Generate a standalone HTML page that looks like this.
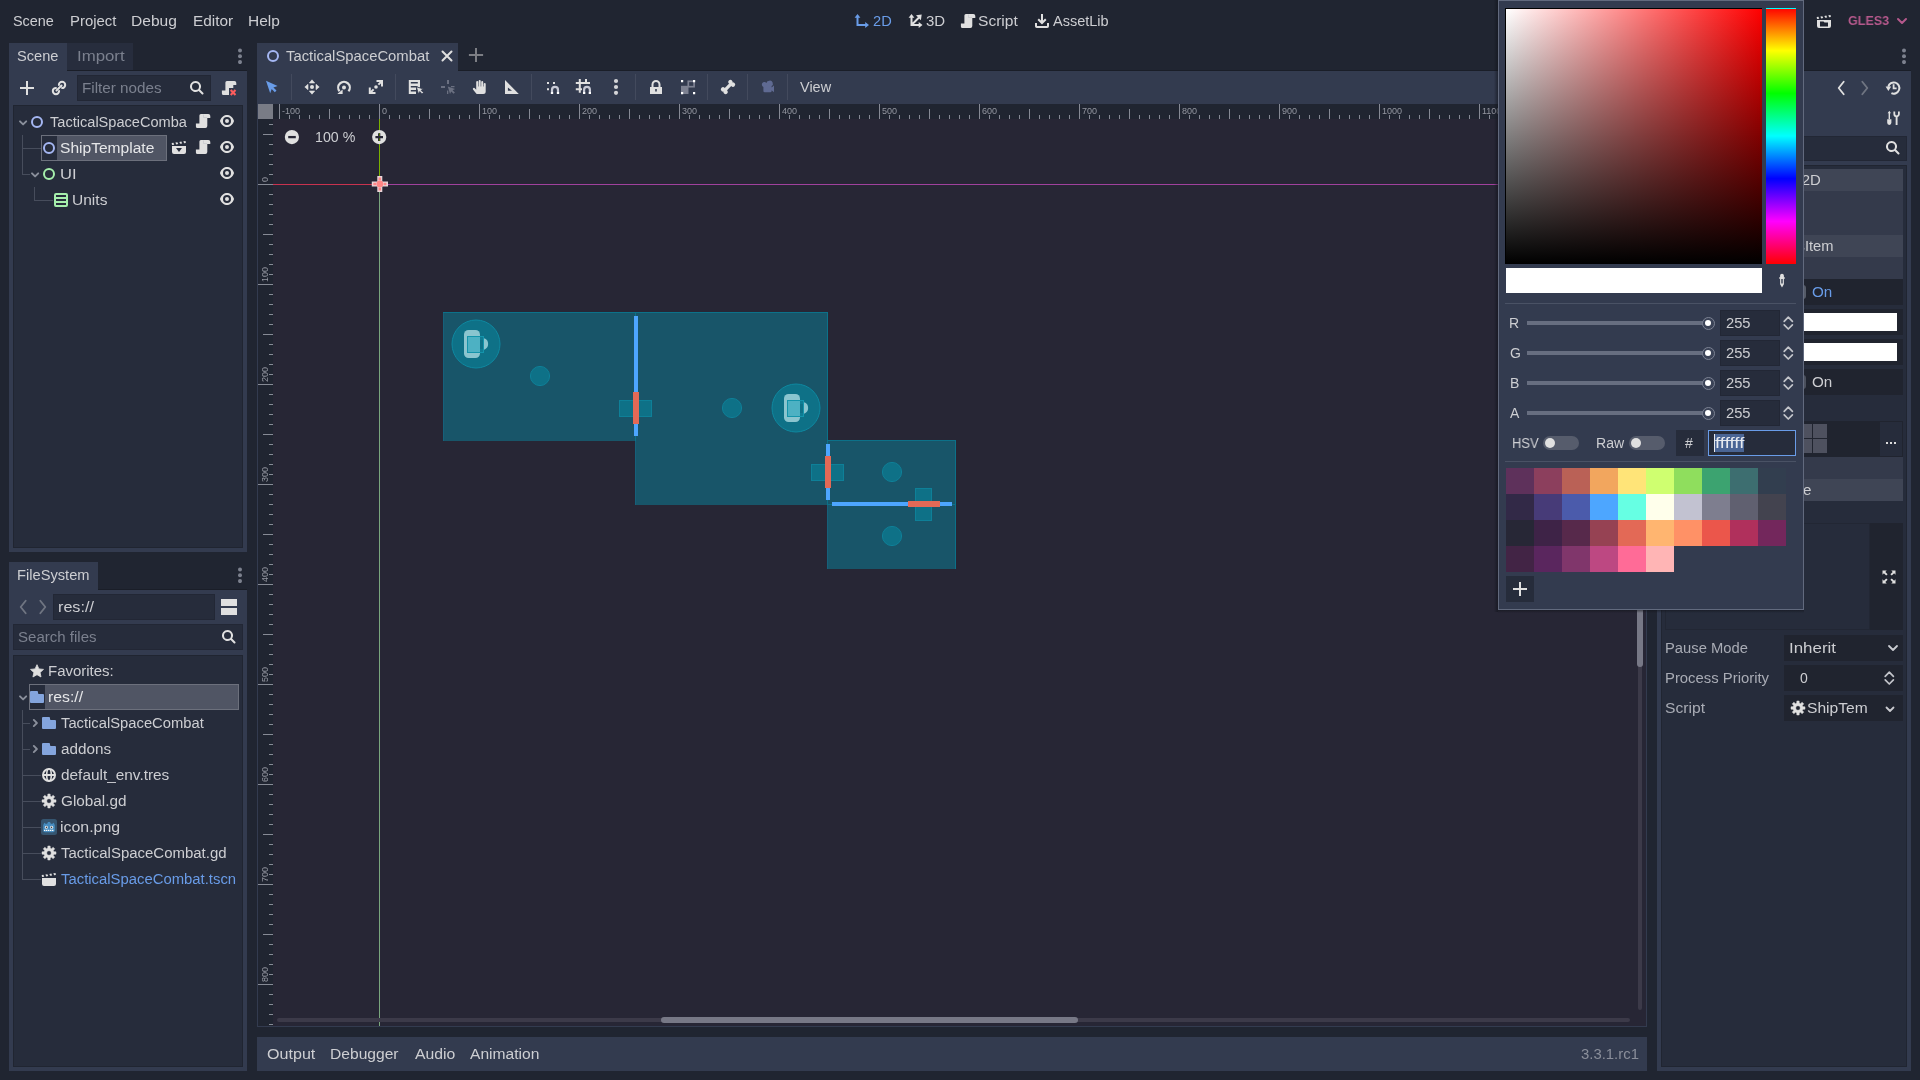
<!DOCTYPE html>
<html lang="en">
<head>
<meta charset="utf-8">
<title>Godot Engine - TacticalSpaceCombat</title>
<style>
*{box-sizing:border-box;margin:0;padding:0}
html,body{width:1920px;height:1080px;overflow:hidden;background:#202531}
body{position:relative;font-family:"Liberation Sans",sans-serif;font-size:14px;color:#cdced2;line-height:1}
.a{position:absolute}
.t{position:absolute;white-space:nowrap;line-height:20px;height:20px;font-size:14px;color:#cdced2}
.dim{color:#7b808e}
.acc{color:#699ce8}
svg{position:absolute;overflow:visible}
.ic{width:16px;height:16px}
.panel{position:absolute;background:#333b4f}
.tree{position:absolute;background:#262c3b;border:1px solid #202531}
.le{position:absolute;background:#262c3b;border:1px solid #222735}
.sep{position:absolute;width:1px;background:#434a5d}
.t{will-change:transform;transform-origin:0 0}
/*SECTION-CSS*/
</style>
</head>
<body>
<svg width="0" height="0" style="display:none">
<defs>

<symbol id="i-add" viewBox="0 0 16 16"><path d="M7 1v6H1v2h6v6h2V9h6V7H9V1z" fill="#e0e0e0"/></symbol>
<symbol id="i-link" viewBox="0 0 16 16"><g fill="none" stroke="#e0e0e0" stroke-width="2" stroke-linecap="round"><path d="M8.100 11.050A3.150 3.150 0 1 1 4.950 7.900"/><path d="M7.900 4.950A3.150 3.150 0 1 1 11.050 8.100"/><path d="M5.500 10.500L10.500 5.500"/></g></symbol>
<symbol id="i-search" viewBox="0 0 16 16"><path d="M6.500 1a5.500 5.500 0 1 0 3.120 10.030l3.170 3.180a1 1 0 1 0 1.420-1.420l-3.180-3.170A5.500 5.500 0 0 0 6.500 1zm0 2a3.500 3.500 0 1 1 0 7 3.500 3.500 0 0 1 0-7z" fill="#e0e0e0"/></symbol>
<symbol id="i-script" viewBox="0 0 16 16"><path d="M5.900 1H13.300a2 2 0 0 1 2 2V5H12.300V13a2 2 0 0 1-2 2H2.400a1.500 1.500 0 0 1-1.500-1.500V10.400H4.400V2.500a1.500 1.500 0 0 1 1.500-1.500z" fill="#e0e0e0"/><path d="M8.500 1.500V4.500H12" fill="none" stroke="#c4c6cb" stroke-width=".7"/></symbol>
<symbol id="i-eye" viewBox="0 0 16 16"><path d="M8 2C5.44 2 2.2 3.95 1.04 7.7a1 1 0 0 0 0 .57C2.16 12.2 5.5 14 8 14s5.84-1.8 6.96-5.73a1 1 0 0 0 0-.55C13.86 3.93 10.55 2 8 2zm0 2a4 4 0 0 1 0 8 4 4 0 0 1 0-8zm0 2a2 2 0 0 0 0 4 2 2 0 0 0 0-4z" fill="#e0e0e0"/></symbol>
<symbol id="i-node2d" viewBox="0 0 16 16"><circle cx="8" cy="8" r="5" fill="none" stroke="#a5b7f3" stroke-width="2"/></symbol>
<symbol id="i-control" viewBox="0 0 16 16"><circle cx="8" cy="8" r="5" fill="none" stroke="#a5efac" stroke-width="2"/></symbol>
<symbol id="i-vbox" viewBox="0 0 16 16"><path d="M3 1a2 2 0 0 0-2 2v10a2 2 0 0 0 2 2h10a2 2 0 0 0 2-2V3a2 2 0 0 0-2-2zm0 2h10v2H3zm0 4h10v2H3zm0 4h10v2H3z" fill="#a5efac"/></symbol>
<symbol id="i-scene" viewBox="0 0 16 16"><path d="M14.56 2l-2.24.33.82 1.9 1.71-.25zM10.34 2.62l-1.98.29.82 1.9 1.98-.29zM6.38 3.19l-1.98.29.82 1.9 1.98-.29zM2.43 3.77l-1.72.25.29 1.98 2.24-.33zM1 7v6a2 2 0 0 0 2 2h10a2 2 0 0 0 2-2V7z" fill="#e0e0e0"/></symbol>
<symbol id="i-inst" viewBox="0 0 16 16"><path d="M14.56 2l-2.24.33.82 1.9 1.71-.25zM10.34 2.62l-1.98.29.82 1.9 1.98-.29zM6.38 3.19l-1.98.29.82 1.9 1.98-.29zM2.43 3.77l-1.72.25.29 1.98 2.24-.33zM1 7v6a2 2 0 0 0 2 2h10a2 2 0 0 0 2-2V7zm4 2h6l-3 4z" fill="#e0e0e0" fill-rule="evenodd"/></symbol>
<symbol id="i-dots" viewBox="0 0 16 16"><g fill="#7c818e"><circle cx="9" cy="2.400" r="2"/><circle cx="9" cy="8.300" r="2"/><circle cx="9" cy="14.100" r="2"/></g></symbol>
<symbol id="i-dotsw" viewBox="0 0 16 16"><g fill="#e0e0e0"><circle cx="8" cy="3" r="1.7"/><circle cx="8" cy="8" r="1.7"/><circle cx="8" cy="13" r="1.7"/></g></symbol>
<symbol id="i-arrdown" viewBox="0 0 16 16"><path d="M5 7.300l3.100 3.100 3.100-3.100" fill="none" stroke="#8a8f9b" stroke-width="1.900" stroke-linecap="round" stroke-linejoin="round"/></symbol>
<symbol id="i-arrright" viewBox="0 0 16 16"><path d="M6.800 4.900l3.100 3.100-3.100 3.100" fill="none" stroke="#8a8f9b" stroke-width="1.900" stroke-linecap="round" stroke-linejoin="round"/></symbol>
<symbol id="i-folder" viewBox="0 0 16 16"><path d="M2 2a1 1 0 0 0-1 1v10a1 1 0 0 0 1 1h12a1 1 0 0 0 1-1V6a1 1 0 0 0-1-1h-4a1 1 0 0 1-1-1V3a1 1 0 0 0-1-1z" fill="#84a5dd"/></symbol>
<symbol id="i-star" viewBox="0 0 16 16"><path d="M8 1.7l1.9 4.2 4.6.5-3.4 3.1.9 4.5L8 11.7 3.9 14l1-4.5L1.5 6.4l4.6-.5z" fill="#e0e0e0" stroke="#e0e0e0" stroke-width=".8" stroke-linejoin="round"/></symbol>
<symbol id="i-gear" viewBox="0 0 16 16"><path d="M6.81 3.04L6.83 1.00L9.17 1.00L9.19 3.04L10.66 3.65L12.12 2.22L13.78 3.88L12.35 5.34L12.96 6.81L15.00 6.83L15.00 9.17L12.96 9.19L12.35 10.66L13.78 12.12L12.12 13.78L10.66 12.35L9.19 12.96L9.17 15.00L6.83 15.00L6.81 12.96L5.34 12.35L3.88 13.78L2.22 12.12L3.65 10.66L3.04 9.19L1.00 9.17L1.00 6.83L3.04 6.81L3.65 5.34L2.22 3.88L3.88 2.22L5.34 3.65zM8 5.700a2.300 2.300 0 1 0 0 4.600 2.300 2.300 0 0 0 0-4.600z" fill="#e0e0e0" fill-rule="evenodd" stroke="#e0e0e0" stroke-width=".5" stroke-linejoin="round"/></symbol>
<symbol id="i-env" viewBox="0 0 16 16"><g fill="none" stroke="#e0e0e0" stroke-width="2"><circle cx="8" cy="8" r="6"/><ellipse cx="8" cy="8" rx="2.300" ry="6" stroke-width="1.600"/><path d="M2 8h12"/></g></symbol>
<symbol id="i-back" viewBox="0 0 16 16"><path d="M10.700 1.700L5.700 8l5 6.300" fill="none" stroke="#e0e0e0" stroke-width="1.800" stroke-linecap="round" stroke-linejoin="round"/></symbol>
<symbol id="i-fwd" viewBox="0 0 16 16"><path d="M5.300 1.700L10.300 8l-5 6.300" fill="none" stroke="#e0e0e0" stroke-width="1.800" stroke-linecap="round" stroke-linejoin="round"/></symbol>
<symbol id="i-updown" viewBox="0 0 16 16"><path d="M4.200 6.300L8.300 2.200l4.100 4.100M4.200 9.900L8.300 14l4.100-4.100" fill="none" stroke="#c3c5cb" stroke-width="1.700" stroke-linecap="round" stroke-linejoin="round"/></symbol>
<!--SYMBOLS-->
</defs>
</svg>


<div class="t" style="left:13.2px;top:11px;transform:scaleX(1.0293)">Scene</div>
<div class="t" style="left:69.5px;top:11px;transform:scaleX(1.0642)">Project</div>
<div class="t" style="left:131.2px;top:11px;transform:scaleX(1.1123)">Debug</div>
<div class="t" style="left:192.5px;top:11px;transform:scaleX(1.0969)">Editor</div>
<div class="t" style="left:248.3px;top:11px;transform:scaleX(1.1053)">Help</div>
<svg class="ic" style="left:854px;top:13px" viewBox="0 0 16 16"><path d="M3.500 4V12H12" fill="none" stroke="#699ce8" stroke-width="2"/><path d="M.6 4.800L3.500 1l2.900 3.800zM11.200 9.100L15 12l-3.800 2.900z" fill="#699ce8"/></svg>
<div class="t acc" style="left:873.0px;top:11px;transform:scaleX(1.0452)">2D</div>
<svg class="ic" style="left:908px;top:13px" viewBox="0 0 16 16"><path d="M3.500 4V12H11.500M3.500 12L11 4.500" fill="none" stroke="#e0e0e0" stroke-width="2"/><path d="M.6 4.800L3.500 1l2.900 3.800zM10.700 9.100L14.500 12l-3.800 2.900zM8 2.300l5.700-.8-.8 5.700z" fill="#e0e0e0"/></svg>
<div class="t" style="left:925.6px;top:11px;transform:scaleX(1.0699)">3D</div>
<svg class="ic" style="left:960px;top:13px"><use href="#i-script"/></svg>
<div class="t" style="left:978.3px;top:11px;transform:scaleX(1.1116)">Script</div>
<svg class="ic" style="left:1034px;top:13px" viewBox="0 0 16 16"><g fill="none" stroke="#e0e0e0" stroke-width="2"><path d="M8 1V9.500"/><path d="M4.200 6.200L8 10l3.800-3.800" stroke-linejoin="miter"/><path d="M2 10v3.200a.8.800 0 0 0 .8.800h10.400a.8.800 0 0 0 .8-.8V10"/></g></svg>
<div class="t" style="left:1053.1px;top:11px;transform:scaleX(1.0359)">AssetLib</div>
<svg class="ic" style="left:1816px;top:13px" viewBox="0 0 16 16"><path d="M14.560 2l-2.240.33.820 1.900 1.710-.250zM10.340 2.620l-1.980.290.820 1.900 1.980-.290zM6.380 3.190l-1.980.290.820 1.900 1.980-.290zM2.430 3.770l-1.720.250.290 1.980 2.240-.330zM1 7v6a2 2 0 0 0 2 2h10a2 2 0 0 0 2-2V7zm3 1.500h3.500l1 1H12V13.500H4z" fill="#e0e0e0" fill-rule="evenodd"/></svg>
<div class="t" style="left:1848.3px;top:11px;color:#b5598c;font-weight:bold;font-size:13.5px;transform:scaleX(0.9300)">GLES3</div>
<svg class="ic" style="left:1894px;top:13px" viewBox="0 0 16 16"><path d="M4 6l4 4 4-4" fill="none" stroke="#b5598c" stroke-width="2" stroke-linecap="round" stroke-linejoin="round"/></svg>



<div class="a" style="left:67px;top:43px;width:66px;height:27px;background:#272d3d"></div>
<div class="a" style="left:9px;top:43px;width:58px;height:29px;background:#333b4f"></div>
<div class="t" style="left:16.9px;top:46px;transform:scaleX(1.0451)">Scene</div>
<div class="t dim" style="left:76.8px;top:46px;transform:scaleX(1.2000)">Import</div>
<svg class="ic" style="left:231px;top:48px"><use href="#i-dots"/></svg>
<div class="panel" style="left:9px;top:71px;width:238px;height:481px"></div>
<svg class="ic" style="left:19px;top:80px"><use href="#i-add"/></svg>
<svg class="ic" style="left:51px;top:80px"><use href="#i-link"/></svg>
<div class="le" style="left:77px;top:75px;width:134px;height:26px"></div>
<div class="t dim" style="left:82.4px;top:78px;transform:scaleX(1.0877)">Filter nodes</div>
<svg class="ic" style="left:189px;top:80px"><use href="#i-search"/></svg>
<svg class="ic" style="left:221px;top:80px" viewBox="0 0 16 16"><path d="M5.900 1H13.300a2 2 0 0 1 2 2V5H12.300V8H8V15H2.400a1.500 1.500 0 0 1-1.500-1.500V10.400H4.400V2.500a1.500 1.500 0 0 1 1.500-1.500z" fill="#e0e0e0"/><path d="M9.700 10.100l4.800 4.800m0-4.800l-4.800 4.800" stroke="#ff5d5d" stroke-width="2.100"/></svg>
<div class="tree" style="left:13px;top:105px;width:230px;height:443px"></div>

<div class="a" style="left:67px;top:70px;width:180px;height:1px;background:#1a1e28"></div>
<div class="a" style="left:98px;top:589px;width:149px;height:1px;background:#1a1e28"></div>
<div class="a" style="left:458px;top:70px;width:1189px;height:1px;background:#1a1e28"></div>
<div class="a" style="left:1738px;top:70px;width:173px;height:1px;background:#1a1e28"></div>
<!-- tree lines -->
<div class="a" style="left:22px;top:135px;width:1px;height:40px;background:#474d5c"></div>
<div class="a" style="left:22px;top:148px;width:19px;height:1px;background:#474d5c"></div>
<div class="a" style="left:22px;top:174px;width:8px;height:1px;background:#474d5c"></div>
<div class="a" style="left:34px;top:187px;width:1px;height:14px;background:#474d5c"></div>
<div class="a" style="left:34px;top:200px;width:19px;height:1px;background:#474d5c"></div>
<!-- row 1 -->
<svg class="ic" style="left:15px;top:114px"><use href="#i-arrdown"/></svg>
<svg class="ic" style="left:29px;top:114px"><use href="#i-node2d"/></svg>
<div class="t" style="left:49.5px;top:112px;transform:scaleX(1.0414)">TacticalSpaceComba</div>
<svg class="ic" style="left:195px;top:113px"><use href="#i-script"/></svg>
<svg class="ic" style="left:219px;top:113px"><use href="#i-eye"/></svg>
<!-- row 2 -->
<div class="a" style="left:41px;top:135px;width:126px;height:26px;background:#505564;border:1px solid #6c707c"></div>
<div class="a" style="left:42px;top:136px;width:15px;height:24px;background:#262c3b"></div>
<svg class="ic" style="left:41px;top:140px"><use href="#i-node2d"/></svg>
<div class="t" style="left:60.0px;top:138px;color:#e6e7e9;transform:scaleX(1.1123)">ShipTemplate</div>
<svg class="ic" style="left:171px;top:139px"><use href="#i-inst"/></svg>
<svg class="ic" style="left:195px;top:139px"><use href="#i-script"/></svg>
<svg class="ic" style="left:219px;top:139px"><use href="#i-eye"/></svg>
<!-- row 3 -->
<svg class="ic" style="left:27px;top:166px"><use href="#i-arrdown"/></svg>
<svg class="ic" style="left:41px;top:166px"><use href="#i-control"/></svg>
<div class="t" style="left:60.3px;top:164px;transform:scaleX(1.1830)">UI</div>
<svg class="ic" style="left:219px;top:165px"><use href="#i-eye"/></svg>
<!-- row 4 -->
<svg class="ic" style="left:53px;top:192px"><use href="#i-vbox"/></svg>
<div class="t" style="left:72.3px;top:190px;transform:scaleX(1.1098)">Units</div>
<svg class="ic" style="left:219px;top:191px"><use href="#i-eye"/></svg>



<div class="a" style="left:9px;top:562px;width:89px;height:29px;background:#333b4f"></div>
<div class="t" style="left:16.9px;top:565px;transform:scaleX(1.0482)">FileSystem</div>
<svg class="ic" style="left:231px;top:567px"><use href="#i-dots"/></svg>
<div class="panel" style="left:9px;top:590px;width:238px;height:481px"></div>
<svg class="ic" style="left:15px;top:599px;opacity:.35"><use href="#i-back"/></svg>
<svg class="ic" style="left:35px;top:599px;opacity:.35"><use href="#i-fwd"/></svg>
<div class="le" style="left:53px;top:594px;width:162px;height:26px"></div>
<div class="t" style="left:58.1px;top:597px;transform:scaleX(1.1544)">res://</div>
<svg class="ic" style="left:221px;top:599px" viewBox="0 0 16 16"><path d="M0 0h16v7H0zM0 9h16v7H0z" fill="#e0e0e0"/></svg>
<div class="le" style="left:13px;top:624px;width:230px;height:26px"></div>
<div class="t dim" style="left:18.2px;top:627px;transform:scaleX(1.0734)">Search files</div>
<svg class="ic" style="left:221px;top:629px"><use href="#i-search"/></svg>
<div class="tree" style="left:13px;top:655px;width:230px;height:412px"></div>
<div class="a" style="left:22px;top:710px;width:1px;height:170px;background:#474d5c"></div>
<div class="a" style="left:22px;top:723px;width:8px;height:1px;background:#474d5c"></div>
<div class="a" style="left:22px;top:749px;width:8px;height:1px;background:#474d5c"></div>
<div class="a" style="left:22px;top:775px;width:19px;height:1px;background:#474d5c"></div>
<div class="a" style="left:22px;top:801px;width:19px;height:1px;background:#474d5c"></div>
<div class="a" style="left:22px;top:827px;width:19px;height:1px;background:#474d5c"></div>
<div class="a" style="left:22px;top:853px;width:19px;height:1px;background:#474d5c"></div>
<div class="a" style="left:22px;top:879px;width:19px;height:1px;background:#474d5c"></div>
<svg class="ic" style="left:29px;top:663px"><use href="#i-star"/></svg>
<div class="t" style="left:48.3px;top:661px;transform:scaleX(1.0701)">Favorites:</div>
<div class="a" style="left:29px;top:684px;width:210px;height:26px;background:#505564;border:1px solid #6c707c"></div>
<div class="a" style="left:30px;top:685px;width:15px;height:24px;background:#262c3b"></div>
<svg class="ic" style="left:15px;top:689px"><use href="#i-arrdown"/></svg>
<svg class="ic" style="left:29px;top:689px"><use href="#i-folder"/></svg>
<div class="t" style="left:48.4px;top:687px;color:#e6e7e9;transform:scaleX(1.1277)">res://</div>
<svg class="ic" style="left:27px;top:715px"><use href="#i-arrright"/></svg>
<svg class="ic" style="left:41px;top:715px"><use href="#i-folder"/></svg>
<div class="t" style="left:61.0px;top:713px;transform:scaleX(1.0547)">TacticalSpaceCombat</div>
<svg class="ic" style="left:27px;top:741px"><use href="#i-arrright"/></svg>
<svg class="ic" style="left:41px;top:741px"><use href="#i-folder"/></svg>
<div class="t" style="left:60.7px;top:739px;transform:scaleX(1.0904)">addons</div>
<svg class="ic" style="left:41px;top:767px"><use href="#i-env"/></svg>
<div class="t" style="left:60.7px;top:765px;transform:scaleX(1.0987)">default_env.tres</div>
<svg class="ic" style="left:41px;top:793px"><use href="#i-gear"/></svg>
<div class="t" style="left:60.6px;top:791px;transform:scaleX(1.0924)">Global.gd</div>
<svg class="ic" style="left:41px;top:819px" viewBox="0 0 16 16"><rect x="0" y="0" width="16" height="16" rx="2.500" fill="#355570"/><path d="M2.200 6.200L3.300 3.800l1.700 1.300 1.300-.5.700-1.500h2l.7 1.500 1.300.5 1.700-1.300 1.100 2.400v5.300a1.800 1.800 0 0 1-1.800 1.800H4a1.800 1.800 0 0 1-1.800-1.800z" fill="#478cbf"/><circle cx="5.400" cy="8.300" r="1.500" fill="#fff"/><circle cx="10.600" cy="8.300" r="1.500" fill="#fff"/><circle cx="5.500" cy="8.400" r=".8" fill="#414042"/><circle cx="10.500" cy="8.400" r=".8" fill="#414042"/><path d="M3 11.400h10" stroke="#fff" stroke-width="1.200" stroke-dasharray="1.400 .6"/></svg>
<div class="t" style="left:60.2px;top:817px;transform:scaleX(1.1353)">icon.png</div>
<svg class="ic" style="left:41px;top:845px"><use href="#i-gear"/></svg>
<div class="t" style="left:61.2px;top:843px;transform:scaleX(1.0689)">TacticalSpaceCombat.gd</div>
<svg class="ic" style="left:41px;top:871px"><use href="#i-scene"/></svg>
<div class="t acc" style="left:61.2px;top:869px;transform:scaleX(1.0615)">TacticalSpaceCombat.tscn</div>



<div class="a" style="left:257px;top:43px;width:201px;height:29px;background:#333b4f"></div>
<svg class="ic" style="left:265px;top:48px"><use href="#i-node2d"/></svg>
<div class="t" style="left:286.0px;top:46px;transform:scaleX(1.0584)">TacticalSpaceCombat</div>
<svg class="ic" style="left:439px;top:48px" viewBox="0 0 16 16"><path d="M3.500 3.500l9 9m0-9l-9 9" stroke="#e0e0e0" stroke-width="2" stroke-linecap="round"/></svg>
<svg class="ic" style="left:468px;top:47px" viewBox="0 0 16 16"><path d="M8 .9v14.200M.9 8h14.200" stroke="#7c7e84" stroke-width="2"/></svg>
<div class="panel" style="left:257px;top:71px;width:1390px;height:956px"></div>
<div class="a" id="vp" style="left:258px;top:104px;width:1388px;height:922px;background:#272635;overflow:hidden"></div>
<svg class="a" style="left:0;top:0;will-change:transform" width="1920" height="1080" viewBox="0 0 1920 1080">
<defs><clipPath id="vpc"><rect x="258" y="104" width="1388" height="922"/></clipPath></defs>
<g clip-path="url(#vpc)">
<!-- axes -->
<path d="M273 184.500H379" stroke="#c8324f" stroke-width="1"/>
<path d="M379 184.500H1646" stroke="#a0419d" stroke-width="1"/>
<path d="M379.500 119V184" stroke="#7bb000" stroke-width="1"/>
<path d="M379.500 184V1026" stroke="#79a67d" stroke-width="1"/>
<!-- rooms -->
<g fill="#185569">
<rect x="443" y="312" width="193" height="129"/><rect x="635" y="312" width="193" height="193"/><rect x="827" y="440" width="129" height="129"/>
</g>
<g stroke="#16607a" stroke-width="1" fill="none"><path d="M443.500 312V441M635.500 312V505M827.500 440V569"/></g>
<g stroke="#0c7189" stroke-width="1" fill="none"><path d="M443 312.500H828M827 440.500H956M827 504.500H956M635.500 312V441M827.500 312V505M955.500 440V569"/></g>
<g fill="#0e7187" stroke="#0e8098" stroke-width="1">
<circle cx="540" cy="376" r="9.600"/><circle cx="732" cy="408" r="9.600"/><circle cx="892" cy="472" r="9.600"/><circle cx="892" cy="536" r="9.600"/>
<rect x="619.500" y="400.500" width="32" height="16"/><rect x="811.500" y="464.500" width="32" height="16"/><rect x="915.500" y="488.500" width="16" height="32"/>
<circle cx="476" cy="344" r="24" stroke="#0e88a0"/><circle cx="796" cy="408" r="24" stroke="#0e88a0"/>
</g>
<g id="unit1">
<rect x="464" y="330" width="16" height="28" rx="4.500" fill="#8ac5cf"/>
<path d="M484 338.300A6 6 0 0 1 484 349.700z" fill="#8ac5cf"/>
<rect x="467" y="336" width="17" height="17" fill="#1494ab"/>
<rect x="468" y="337" width="12" height="15" fill="#4db1c3"/>
<rect x="480" y="337" width="3" height="15" fill="#0f7c93"/>
<rect x="480" y="340" width="3" height="9" fill="#0e7187"/>
</g>
<use href="#unit1" x="320" y="64"/>
<g fill="#4da6ff"><rect x="634" y="316" width="4" height="120"/><rect x="826" y="444" width="4" height="56"/><rect x="832" y="502" width="120" height="4"/></g>
<g fill="#e36956"><rect x="633" y="392" width="6" height="32"/><rect x="825" y="456" width="6" height="32"/><rect x="908" y="501" width="32" height="6"/></g>
<!-- rulers -->
<rect x="258" y="104" width="1388" height="15" fill="#202531"/>
<rect x="258" y="104" width="15" height="922" fill="#202531"/>
<rect x="258" y="104" width="15" height="15" fill="#797c86"/>
<g stroke="#868a95" stroke-width="1" fill="none"><path d="M279.5 104v15"/><path d="M289.5 115v4"/><path d="M299.5 115v4"/><path d="M309.5 115v4"/><path d="M319.5 115v4"/><path d="M329.5 109v10"/><path d="M339.5 115v4"/><path d="M349.5 115v4"/><path d="M359.5 115v4"/><path d="M369.5 115v4"/><path d="M379.5 104v15"/><path d="M389.5 115v4"/><path d="M399.5 115v4"/><path d="M409.5 115v4"/><path d="M419.5 115v4"/><path d="M429.5 109v10"/><path d="M439.5 115v4"/><path d="M449.5 115v4"/><path d="M459.5 115v4"/><path d="M469.5 115v4"/><path d="M479.5 104v15"/><path d="M489.5 115v4"/><path d="M499.5 115v4"/><path d="M509.5 115v4"/><path d="M519.5 115v4"/><path d="M529.5 109v10"/><path d="M539.5 115v4"/><path d="M549.5 115v4"/><path d="M559.5 115v4"/><path d="M569.5 115v4"/><path d="M579.5 104v15"/><path d="M589.5 115v4"/><path d="M599.5 115v4"/><path d="M609.5 115v4"/><path d="M619.5 115v4"/><path d="M629.5 109v10"/><path d="M639.5 115v4"/><path d="M649.5 115v4"/><path d="M659.5 115v4"/><path d="M669.5 115v4"/><path d="M679.5 104v15"/><path d="M689.5 115v4"/><path d="M699.5 115v4"/><path d="M709.5 115v4"/><path d="M719.5 115v4"/><path d="M729.5 109v10"/><path d="M739.5 115v4"/><path d="M749.5 115v4"/><path d="M759.5 115v4"/><path d="M769.5 115v4"/><path d="M779.5 104v15"/><path d="M789.5 115v4"/><path d="M799.5 115v4"/><path d="M809.5 115v4"/><path d="M819.5 115v4"/><path d="M829.5 109v10"/><path d="M839.5 115v4"/><path d="M849.5 115v4"/><path d="M859.5 115v4"/><path d="M869.5 115v4"/><path d="M879.5 104v15"/><path d="M889.5 115v4"/><path d="M899.5 115v4"/><path d="M909.5 115v4"/><path d="M919.5 115v4"/><path d="M929.5 109v10"/><path d="M939.5 115v4"/><path d="M949.5 115v4"/><path d="M959.5 115v4"/><path d="M969.5 115v4"/><path d="M979.5 104v15"/><path d="M989.5 115v4"/><path d="M999.5 115v4"/><path d="M1009.5 115v4"/><path d="M1019.5 115v4"/><path d="M1029.5 109v10"/><path d="M1039.5 115v4"/><path d="M1049.5 115v4"/><path d="M1059.5 115v4"/><path d="M1069.5 115v4"/><path d="M1079.5 104v15"/><path d="M1089.5 115v4"/><path d="M1099.5 115v4"/><path d="M1109.5 115v4"/><path d="M1119.5 115v4"/><path d="M1129.5 109v10"/><path d="M1139.5 115v4"/><path d="M1149.5 115v4"/><path d="M1159.5 115v4"/><path d="M1169.5 115v4"/><path d="M1179.5 104v15"/><path d="M1189.5 115v4"/><path d="M1199.5 115v4"/><path d="M1209.5 115v4"/><path d="M1219.5 115v4"/><path d="M1229.5 109v10"/><path d="M1239.5 115v4"/><path d="M1249.5 115v4"/><path d="M1259.5 115v4"/><path d="M1269.5 115v4"/><path d="M1279.5 104v15"/><path d="M1289.5 115v4"/><path d="M1299.5 115v4"/><path d="M1309.5 115v4"/><path d="M1319.5 115v4"/><path d="M1329.5 109v10"/><path d="M1339.5 115v4"/><path d="M1349.5 115v4"/><path d="M1359.5 115v4"/><path d="M1369.5 115v4"/><path d="M1379.5 104v15"/><path d="M1389.5 115v4"/><path d="M1399.5 115v4"/><path d="M1409.5 115v4"/><path d="M1419.5 115v4"/><path d="M1429.5 109v10"/><path d="M1439.5 115v4"/><path d="M1449.5 115v4"/><path d="M1459.5 115v4"/><path d="M1469.5 115v4"/><path d="M1479.5 104v15"/><path d="M1489.5 115v4"/><path d="M1499.5 115v4"/><path d="M1509.5 115v4"/><path d="M1519.5 115v4"/><path d="M1529.5 109v10"/><path d="M1539.5 115v4"/><path d="M1549.5 115v4"/><path d="M1559.5 115v4"/><path d="M1569.5 115v4"/><path d="M1579.5 104v15"/><path d="M1589.5 115v4"/><path d="M1599.5 115v4"/><path d="M1609.5 115v4"/><path d="M1619.5 115v4"/><path d="M1629.5 109v10"/><path d="M1639.5 115v4"/><path d="M269 124.5h4"/><path d="M263 134.5h10"/><path d="M269 144.5h4"/><path d="M269 154.5h4"/><path d="M269 164.5h4"/><path d="M269 174.5h4"/><path d="M258 184.5h15"/><path d="M269 194.5h4"/><path d="M269 204.5h4"/><path d="M269 214.5h4"/><path d="M269 224.5h4"/><path d="M263 234.5h10"/><path d="M269 244.5h4"/><path d="M269 254.5h4"/><path d="M269 264.5h4"/><path d="M269 274.5h4"/><path d="M258 284.5h15"/><path d="M269 294.5h4"/><path d="M269 304.5h4"/><path d="M269 314.5h4"/><path d="M269 324.5h4"/><path d="M263 334.5h10"/><path d="M269 344.5h4"/><path d="M269 354.5h4"/><path d="M269 364.5h4"/><path d="M269 374.5h4"/><path d="M258 384.5h15"/><path d="M269 394.5h4"/><path d="M269 404.5h4"/><path d="M269 414.5h4"/><path d="M269 424.5h4"/><path d="M263 434.5h10"/><path d="M269 444.5h4"/><path d="M269 454.5h4"/><path d="M269 464.5h4"/><path d="M269 474.5h4"/><path d="M258 484.5h15"/><path d="M269 494.5h4"/><path d="M269 504.5h4"/><path d="M269 514.5h4"/><path d="M269 524.5h4"/><path d="M263 534.5h10"/><path d="M269 544.5h4"/><path d="M269 554.5h4"/><path d="M269 564.5h4"/><path d="M269 574.5h4"/><path d="M258 584.5h15"/><path d="M269 594.5h4"/><path d="M269 604.5h4"/><path d="M269 614.5h4"/><path d="M269 624.5h4"/><path d="M263 634.5h10"/><path d="M269 644.5h4"/><path d="M269 654.5h4"/><path d="M269 664.5h4"/><path d="M269 674.5h4"/><path d="M258 684.5h15"/><path d="M269 694.5h4"/><path d="M269 704.5h4"/><path d="M269 714.5h4"/><path d="M269 724.5h4"/><path d="M263 734.5h10"/><path d="M269 744.5h4"/><path d="M269 754.5h4"/><path d="M269 764.5h4"/><path d="M269 774.5h4"/><path d="M258 784.5h15"/><path d="M269 794.5h4"/><path d="M269 804.5h4"/><path d="M269 814.5h4"/><path d="M269 824.5h4"/><path d="M263 834.5h10"/><path d="M269 844.5h4"/><path d="M269 854.5h4"/><path d="M269 864.5h4"/><path d="M269 874.5h4"/><path d="M258 884.5h15"/><path d="M269 894.5h4"/><path d="M269 904.5h4"/><path d="M269 914.5h4"/><path d="M269 924.5h4"/><path d="M263 934.5h10"/><path d="M269 944.5h4"/><path d="M269 954.5h4"/><path d="M269 964.5h4"/><path d="M269 974.5h4"/><path d="M258 984.5h15"/><path d="M269 994.5h4"/><path d="M269 1004.5h4"/><path d="M269 1014.5h4"/><path d="M269 1024.5h4"/></g>
<g font-family="Liberation Sans, sans-serif" font-size="9" fill="#9497a1"><text x="282" y="114">-100</text><text x="382" y="114">0</text><text x="482" y="114">100</text><text x="582" y="114">200</text><text x="682" y="114">300</text><text x="782" y="114">400</text><text x="882" y="114">500</text><text x="982" y="114">600</text><text x="1082" y="114">700</text><text x="1182" y="114">800</text><text x="1282" y="114">900</text><text x="1382" y="114">1000</text><text x="1482" y="114">1100</text><text transform="translate(268 182) rotate(-90)">0</text><text transform="translate(268 282) rotate(-90)">100</text><text transform="translate(268 382) rotate(-90)">200</text><text transform="translate(268 482) rotate(-90)">300</text><text transform="translate(268 582) rotate(-90)">400</text><text transform="translate(268 682) rotate(-90)">500</text><text transform="translate(268 782) rotate(-90)">600</text><text transform="translate(268 882) rotate(-90)">700</text><text transform="translate(268 982) rotate(-90)">800</text></g>
<!-- scrollbars -->
<rect x="277" y="1018" width="1353" height="4" rx="2" fill="#3c3a49"/>
<rect x="661" y="1017" width="417" height="6" rx="3" fill="#777886"/>
<rect x="1638" y="124" width="4" height="886" rx="2" fill="#3c3a49"/>
<rect x="1637" y="560" width="6" height="107" rx="3" fill="#777886"/>
<!-- origin cross -->
<g><path d="M377.300 176h5v5.500h5.700v5h-5.700V192h-5v-5.500h-5.500v-5h5.500z" fill="#e9d6da"/><circle cx="379.800" cy="184" r="3.400" fill="#ff8686"/><path d="M378.500 177.500h2.600v2.800h-2.600zM378.500 187.800h2.600v2.800h-2.600zM373.300 182.700h2.800v2.600h-2.800zM383.600 182.700h2.800v2.600h-2.800z" fill="#ff8686"/></g>
</g>
</svg>
<!-- zoom controls -->
<svg class="ic" style="left:284px;top:129px" viewBox="0 0 16 16"><circle cx="7.900" cy="8.100" r="7.100" fill="#e0e0e0"/><path d="M4.200 8.100h7.600" stroke="#272635" stroke-width="2.300"/></svg>
<div class="t" style="left:314.7px;top:127px;transform:scaleX(1.0146)">100 %</div>
<svg class="ic" style="left:371px;top:129px" viewBox="0 0 16 16"><circle cx="8.200" cy="8.100" r="7.100" fill="#e0e0e0"/><path d="M4.400 8.100h7.600M8.200 4.300v7.600" stroke="#272635" stroke-width="2.300"/><path d="M8.500 4.300v2.600M8.500 9.300v2.600" stroke="#4f7300" stroke-width="1"/></svg>
<svg class="ic" style="left:264px;top:79px" viewBox="0 0 16 16"><path d="M2 1.800L13.600 6.900 9.400 8.400l3.100 3.100-1.700 1.700-3.100-3.100-1.500 4.200z" fill="#699ce8"/></svg>
<div class="sep" style="left:291px;top:74px;height:26px"></div>
<svg class="ic" style="left:304px;top:79px" viewBox="0 0 16 16"><path d="M8 .8l2.700 3.200H5.300zM8 15.200l-2.700-3.200h5.400zM.8 8l3.200-2.700v5.400zM15.200 8l-3.200 2.700V5.300z" fill="#e0e0e0" stroke="#e0e0e0" stroke-width=".6" stroke-linejoin="round"/><circle cx="8" cy="8" r="2" fill="#e0e0e0"/></svg>
<svg class="ic" style="left:336px;top:79px" viewBox="0 0 16 16"><path d="M3.560 12.300A5.800 5.800 0 1 1 12.440 12.300" fill="none" stroke="#e0e0e0" stroke-width="2.200"/><path d="M1.300 15H6.600V10.400z" fill="#e0e0e0"/><circle cx="8" cy="8.400" r="2" fill="#e0e0e0"/></svg>
<svg class="ic" style="left:368px;top:79px" viewBox="0 0 16 16"><path d="M8.500 1H15V7.500H13V3H8.500zM.8 8.500H2.800V13H7.500V15H.8z" fill="#e0e0e0"/><path d="M13.800 2.200L10.400 5.600M2.200 13.800l3.400-3.400" stroke="#e0e0e0" stroke-width="2"/><circle cx="8" cy="8" r="1.800" fill="#e0e0e0"/></svg>
<div class="sep" style="left:395px;top:74px;height:26px"></div>
<svg class="ic" style="left:408px;top:79px" viewBox="0 0 16 16"><path d="M.8 1H12V8.500H9.500V7H2.800V8.500H8V11H2.800v1.500H8V15H.8zM2.800 3V4.500h7V3z" fill="#e0e0e0" fill-rule="evenodd"/><path d="M8.300 7.800l2.200 7.200 1.300-2.400 2.300 2.300 1.300-1.300-2.300-2.300 2.400-1.300z" fill="#e0e0e0" stroke="#333b4f" stroke-width=".8"/></svg>
<svg class="ic" style="left:440px;top:79px" viewBox="0 0 16 16"><g fill="#6b7081"><path d="M7 1h2v4H7zM1 7h4v2H1zM7 11.500h1.300V15H7zM11 7h3.500v1.300H11z"/><path d="M7.800 7.600l2.200 7.400 1.300-2.500 2.300 2.300 1.300-1.300-2.300-2.300 2.500-1.300z"/></g></svg>
<svg class="ic" style="left:472px;top:79px" viewBox="0 0 16 16"><path d="M8 1a1 1 0 0 0-1 1v5.500h-.5V3a1 1 0 0 0-2 0v7.700L3.100 9.200a1.150 1.150 0 0 0-1.800 1.400l3.200 3.900A1.500 1.500 0 0 0 5.700 15H11.500A2.500 2.500 0 0 0 14 12.500V5a1 1 0 0 0-2 0v2.500h-.5V3a1 1 0 0 0-2 0v4.500H9V2a1 1 0 0 0-1-1z" fill="#e0e0e0" transform="translate(-.3 0)"/></svg>
<svg class="ic" style="left:504px;top:79px" viewBox="0 0 16 16"><path d="M1 1V15H14.800zM3.900 8.400l4.100 3.400H3.900z" fill="#e0e0e0" fill-rule="evenodd"/></svg>
<div class="sep" style="left:531px;top:74px;height:26px"></div>
<svg class="ic" style="left:545px;top:79px" viewBox="0 0 16 16"><path d="M2 3h2v2H2zM8 3h2v2H8zM2 9.200h2v2H2z" fill="#e0e0e0"/><path d="M7 15V10.900a3 3 0 0 1 6 0V15" fill="none" stroke="#c8cad6" stroke-width="2.200"/><path d="M5.900 13h2.200v2H5.900zM11.900 13h2.200v2h-2.200z" fill="#fff"/></svg>
<svg class="ic" style="left:576px;top:79px" viewBox="0 0 16 16"><path d="M2.800 0h2V3H9V0h2V3h3V5H4.800V9.200H6v2H4.800V13.800H2.800V11.200H-.2v-2h3V5h-3V3h3z" fill="#e0e0e0"/><path d="M8.100 15V10.700a2.900 2.900 0 0 1 5.800 0V15" fill="none" stroke="#c8cad6" stroke-width="2.200"/><path d="M7 13h2.200v2H7zM12.800 13h2.200v2h-2.200z" fill="#fff"/></svg>
<svg class="ic" style="left:608px;top:79px" viewBox="0 0 16 16"><circle cx="8" cy="2" r="2.100" fill="#d5d5d8"/><circle cx="8" cy="8" r="2.100" fill="#d5d5d8"/><circle cx="8" cy="13.800" r="2.100" fill="#d5d5d8"/></svg>
<div class="sep" style="left:635px;top:74px;height:26px"></div>
<svg class="ic" style="left:648px;top:79px" viewBox="0 0 16 16"><path d="M8 1a4.500 4.500 0 0 0-4.500 4.500V8H2v7h12V8h-1.500V5.500A4.500 4.500 0 0 0 8 1zm0 2a2.500 2.500 0 0 1 2.500 2.500V8h-5V5.500A2.500 2.500 0 0 1 8 3zm-.8 7h1.600v2.500H7.200z" fill="#e0e0e0" fill-rule="evenodd"/></svg>
<svg class="ic" style="left:680px;top:79px" viewBox="0 0 16 16"><path d="M1 6.800h7.500V15H1z" fill="#7d8191"/><rect x="8.300" y="2.300" width="5.800" height="5.400" fill="none" stroke="#7d8191" stroke-width="1.700"/><path d="M1 1h2.200v2.200H1zM13 1h2.200v2.200H13zM1 13h2.200v2.200H1zM13 13h2.200v2.200H13z" fill="#fff"/></svg>
<div class="sep" style="left:707px;top:74px;height:26px"></div>
<svg class="ic" style="left:720px;top:79px" viewBox="0 0 16 16"><g transform="rotate(-45 8 8)" fill="#e0e0e0"><rect x="3" y="6.400" width="10" height="3.200"/><circle cx="2.800" cy="6.200" r="2.200"/><circle cx="2.800" cy="9.800" r="2.200"/><circle cx="13.200" cy="6.200" r="2.200"/><circle cx="13.200" cy="9.800" r="2.200"/></g></svg>
<div class="sep" style="left:747px;top:74px;height:26px"></div>
<svg class="ic" style="left:760px;top:79px" viewBox="0 0 16 16"><path d="M9.300 1.700a3 3 0 0 0-2.900 2.200 2.600 2.600 0 1 0-3 4.100V12a1.300 1.300 0 0 0 1.300 1.300h5.600A1.300 1.300 0 0 0 11.600 12v-.7l2.400 1.900V6.500l-2.400 1.900V7.100A3 3 0 0 0 9.300 1.700z" fill="#5f6a92"/></svg>
<div class="sep" style="left:787px;top:74px;height:26px"></div>
<div class="t" style="left:799.8px;top:77px;transform:scaleX(1.0348)">View</div>




<div class="panel" style="left:257px;top:1037px;width:1390px;height:34px"></div>
<div class="t" style="left:266.8px;top:1044px;transform:scaleX(1.1498)">Output</div>
<div class="t" style="left:330.0px;top:1044px;transform:scaleX(1.1146)">Debugger</div>
<div class="t" style="left:414.8px;top:1044px;transform:scaleX(1.1263)">Audio</div>
<div class="t" style="left:469.8px;top:1044px;transform:scaleX(1.1152)">Animation</div>
<div class="t" style="left:1581.0px;top:1044px;color:#8a8e9a;transform:scaleX(1.0631)">3.3.1.rc1</div>



<div class="a" style="left:1657px;top:43px;width:81px;height:29px;background:#333b4f"></div>
<div class="t" style="left:1666px;top:46px">Inspector</div>
<div class="a" style="left:1738px;top:43px;width:52px;height:27px;background:#272d3d"></div>
<div class="t dim" style="left:1748px;top:46px">Node</div>
<svg class="ic" style="left:1895px;top:48px"><use href="#i-dots"/></svg>
<div class="panel" style="left:1657px;top:71px;width:254px;height:1000px"></div>
<svg class="ic" style="left:1833px;top:80px"><use href="#i-back"/></svg>
<svg class="ic" style="left:1857px;top:80px;opacity:.35"><use href="#i-fwd"/></svg>
<svg class="ic" style="left:1885px;top:80px" viewBox="0 0 16 16"><path d="M3.300 6.800A5.600 5.600 0 1 1 6.400 13.100" fill="none" stroke="#e0e0e0" stroke-width="2"/><path d="M.6 6.600H6.200L3.400 10.900z" fill="#e0e0e0"/><path d="M8.600 4.200V8.300H11.600" fill="none" stroke="#e0e0e0" stroke-width="1.800"/></svg>
<svg class="ic" style="left:1665px;top:110px"><use href="#i-node2d"/></svg>
<div class="t" style="left:1685px;top:108px">ShipTemplate</div>
<svg class="ic" style="left:1885px;top:110px" viewBox="0 0 16 16"><path d="M4.300 .8L6 3.200H5V9H3.600V3.200H2.600zM2.200 9.200H6.400V12.800a2.100 2.100 0 0 1-4.200 0z" fill="#e0e0e0"/><path d="M9.300 1.500V4a2.300 2.300 0 0 0 4.600 0V1.500" fill="none" stroke="#e0e0e0" stroke-width="1.800"/><path d="M11.600 6V15" stroke="#e0e0e0" stroke-width="1.900"/></svg>
<div class="le" style="left:1661px;top:136px;width:246px;height:25px"></div>
<div class="t dim" style="left:1667px;top:138px">Filter properties</div>
<svg class="ic" style="left:1885px;top:140px"><use href="#i-search"/></svg>
<div class="tree" style="left:1661px;top:165px;width:246px;height:902px"></div>
<div class="a" style="left:1665px;top:169px;width:238px;height:22px;background:#3f4555"></div>
<svg class="ic" style="left:1750px;top:172px"><use href="#i-node2d"/></svg>
<div class="t" style="left:1766.3px;top:170px;transform:scaleX(1.0675)">Node2D</div>
<div class="a" style="left:1665px;top:191px;width:238px;height:44px;background:#343a4b"></div>
<div class="a" style="left:1665px;top:235px;width:238px;height:22px;background:#3f4555"></div>
<div class="t" style="left:1754.8px;top:236px;transform:scaleX(1.0510)">CanvasItem</div>
<div class="a" style="left:1665px;top:257px;width:238px;height:22px;background:#343a4b"></div>
<div class="a" style="left:1784px;top:279px;width:119px;height:26px;background:#20242f"></div>
<div class="a" style="left:1791px;top:285px;width:15px;height:14px;border-radius:3px;background:#555b68"></div>
<div class="t acc" style="left:1811.8px;top:282px;transform:scaleX(1.0864)">On</div>
<div class="a" style="left:1784px;top:309px;width:119px;height:26px;background:#20242f"></div>
<div class="a" style="left:1790px;top:313px;width:107px;height:18px;background:#fff"></div>
<div class="a" style="left:1784px;top:339px;width:119px;height:26px;background:#20242f"></div>
<div class="a" style="left:1790px;top:343px;width:107px;height:18px;background:#fff"></div>
<div class="a" style="left:1784px;top:369px;width:119px;height:26px;background:#20242f"></div>
<div class="a" style="left:1791px;top:375px;width:15px;height:14px;border-radius:3px;background:#4b505d"></div>
<div class="t" style="left:1811.8px;top:372px;transform:scaleX(1.0864)">On</div>
<div class="a" style="left:1665px;top:421px;width:238px;height:36px;background:#20242f"></div>
<div class="a" style="left:1798px;top:424px;width:14px;height:14px;background:#4e515f"></div>
<div class="a" style="left:1813px;top:424px;width:14px;height:14px;background:#4e515f"></div>
<div class="a" style="left:1798px;top:439px;width:14px;height:14px;background:#4e515f"></div>
<div class="a" style="left:1813px;top:439px;width:14px;height:14px;background:#4e515f"></div>
<div class="a" style="left:1880px;top:422px;width:22px;height:34px;background:#262c3b"></div>
<div class="a" style="left:1886px;top:442px;width:2px;height:2px;background:#dcdcdc;box-shadow:4px 0 #dcdcdc,8px 0 #dcdcdc"></div>
<div class="a" style="left:1665px;top:457px;width:238px;height:22px;background:#343a4b"></div>
<div class="a" style="left:1665px;top:479px;width:238px;height:22px;background:#3f4555"></div>
<div class="t" style="left:1775.3px;top:480px;transform:scaleX(1.0860)">Node</div>
<div class="a" style="left:1665px;top:523px;width:238px;height:107px;background:#20242f"></div>
<div class="a" style="left:1665px;top:523px;width:205px;height:107px;background:#262c3b;border:1px solid #222734"></div>
<svg class="ic" style="left:1881px;top:569px" viewBox="0 0 16 16"><path d="M1.500 1.500h4.200L4.300 2.900l2.300 2.300-1.400 1.400-2.300-2.300-1.400 1.400zM14.500 1.500v4.200l-1.400-1.400-2.300 2.300-1.400-1.400 2.300-2.300-1.400-1.400zM1.500 14.500v-4.200l1.400 1.400 2.300-2.300 1.400 1.400-2.300 2.300 1.400 1.400zM14.500 14.500h-4.200l1.400-1.400-2.300-2.300 1.400-1.400 2.300 2.300 1.400-1.400z" fill="#e0e0e0"/></svg>
<div class="t" style="left:1665.1px;top:638px;color:#a9acb5;transform:scaleX(1.0538)">Pause Mode</div>
<div class="a" style="left:1784px;top:635px;width:119px;height:26px;background:#20242f"></div>
<div class="t" style="left:1788.9px;top:638px;transform:scaleX(1.2084)">Inherit</div>
<svg class="ic" style="left:1885px;top:640px" viewBox="0 0 16 16"><path d="M4 6l4 4 4-4" fill="none" stroke="#c9cbd0" stroke-width="1.800" stroke-linecap="round" stroke-linejoin="round"/></svg>
<div class="t" style="left:1665.1px;top:668px;color:#a9acb5;transform:scaleX(1.0611)">Process Priority</div>
<div class="a" style="left:1784px;top:665px;width:119px;height:26px;background:#20242f"></div>
<div class="t" style="left:1799.9px;top:668px;transform:scaleX(1.0000)">0</div>
<svg class="ic" style="left:1881px;top:670px"><use href="#i-updown"/></svg>
<div class="t" style="left:1665.1px;top:698px;color:#a9acb5;transform:scaleX(1.1174)">Script</div>
<div class="a" style="left:1784px;top:695px;width:119px;height:26px;background:#20242f"></div>
<svg class="ic" style="left:1790px;top:700px"><use href="#i-gear"/></svg>
<div class="t" style="left:1807.1px;top:698px;transform:scaleX(1.1138)">ShipTem</div>
<svg class="ic" style="left:1882px;top:701px" viewBox="0 0 16 16"><path d="M4.500 6.500l3.500 3.500 3.500-3.500" fill="none" stroke="#c9cbd0" stroke-width="1.800" stroke-linecap="round" stroke-linejoin="round"/></svg>



<div class="a" style="left:1494px;top:0;width:4px;height:612px;background:linear-gradient(to right,rgba(15,18,25,0),rgba(15,18,25,.55))"></div>
<div class="a" style="left:1498px;top:610px;width:306px;height:3px;background:linear-gradient(to bottom,rgba(15,18,25,.5),rgba(15,18,25,0))"></div>
<div class="a" id="popup" style="left:1498px;top:0;width:306px;height:610px;background:#333b4f;border:1px solid #626a7e">
<div style="position:absolute;left:-1px;top:-1px;width:306px;height:610px">
<div class="a" style="left:7px;top:8px;width:257px;height:256px;background:#000"></div>
<div class="a" style="left:8px;top:9px;width:256px;height:255px;background:linear-gradient(to bottom,rgba(0,0,0,0),#000),linear-gradient(to right,#fff,#f00)"></div>
<div class="a" style="left:268px;top:8px;width:30px;height:256px;background:linear-gradient(to bottom,#f00 0%,#ff0 16.670%,#0f0 33.330%,#0ff 50%,#00f 66.670%,#f0f 83.330%,#f00 100%)"></div>
<div class="a" style="left:268px;top:8px;width:30px;height:1px;background:#0ff"></div>
<div class="a" style="left:8px;top:268px;width:256px;height:25px;background:#fff"></div>
<svg class="ic" style="left:276px;top:273px" viewBox="0 0 16 16"><path d="M8 .8c1.100 0 1.900.9 1.900 2v1.400h.9v1.600h-.9v5.400L8 14.600 6.100 11.200V5.800h-.9V4.200h.9V2.800c0-1.100.8-2 1.900-2zM7.300 6v4.600h1.400V6z" fill="#e0e0e0" fill-rule="evenodd"/></svg>
<div class="a" style="left:7px;top:303px;width:291px;height:1px;background:#4a5265"></div>
<div class="t" style="left:11.2px;top:313px;transform:scaleX(1.0000)">R</div>
<div class="a" style="left:29px;top:321px;width:187px;height:4px;background:#676e80"></div>
<div class="a" style="left:203.500px;top:316.5px;width:13px;height:13px;border-radius:7px;border:1.300px solid #7c8293;background:#3b4357"></div>
<div class="a" style="left:206.600px;top:319.6px;width:6.800px;height:6.800px;border-radius:4px;background:#fff"></div>
<div class="le" style="left:222px;top:310px;width:60px;height:26px"></div>
<div class="t" style="left:227.6px;top:313px;transform:scaleX(1.0512)">255</div>
<svg class="ic" style="left:282px;top:315px"><use href="#i-updown"/></svg>
<div class="t" style="left:11.6px;top:343px;transform:scaleX(1.0000)">G</div>
<div class="a" style="left:29px;top:351px;width:187px;height:4px;background:#676e80"></div>
<div class="a" style="left:203.500px;top:346.5px;width:13px;height:13px;border-radius:7px;border:1.300px solid #7c8293;background:#3b4357"></div>
<div class="a" style="left:206.600px;top:349.6px;width:6.800px;height:6.800px;border-radius:4px;background:#fff"></div>
<div class="le" style="left:222px;top:340px;width:60px;height:26px"></div>
<div class="t" style="left:227.6px;top:343px;transform:scaleX(1.0512)">255</div>
<svg class="ic" style="left:282px;top:345px"><use href="#i-updown"/></svg>
<div class="t" style="left:11.6px;top:373px;transform:scaleX(1.0000)">B</div>
<div class="a" style="left:29px;top:381px;width:187px;height:4px;background:#676e80"></div>
<div class="a" style="left:203.500px;top:376.5px;width:13px;height:13px;border-radius:7px;border:1.300px solid #7c8293;background:#3b4357"></div>
<div class="a" style="left:206.600px;top:379.6px;width:6.800px;height:6.800px;border-radius:4px;background:#fff"></div>
<div class="le" style="left:222px;top:370px;width:60px;height:26px"></div>
<div class="t" style="left:227.6px;top:373px;transform:scaleX(1.0512)">255</div>
<svg class="ic" style="left:282px;top:375px"><use href="#i-updown"/></svg>
<div class="t" style="left:11.8px;top:403px;transform:scaleX(1.0000)">A</div>
<div class="a" style="left:29px;top:411px;width:187px;height:4px;background:#676e80"></div>
<div class="a" style="left:203.500px;top:406.5px;width:13px;height:13px;border-radius:7px;border:1.300px solid #7c8293;background:#3b4357"></div>
<div class="a" style="left:206.600px;top:409.6px;width:6.800px;height:6.800px;border-radius:4px;background:#fff"></div>
<div class="le" style="left:222px;top:400px;width:60px;height:26px"></div>
<div class="t" style="left:227.6px;top:403px;transform:scaleX(1.0512)">255</div>
<svg class="ic" style="left:282px;top:405px"><use href="#i-updown"/></svg>

<div class="t" style="left:13.5px;top:433px;transform:scaleX(0.9271)">HSV</div>
<div class="a" style="left:45px;top:436px;width:36px;height:14px;border-radius:7px;background:#565c6c"></div>
<div class="a" style="left:46.700px;top:437.700px;width:10.600px;height:10.600px;border-radius:6px;background:#e0e0e0"></div>
<div class="t" style="left:97.6px;top:433px;transform:scaleX(1.0053)">Raw</div>
<div class="a" style="left:131px;top:436px;width:36px;height:14px;border-radius:7px;background:#565c6c"></div>
<div class="a" style="left:132.500px;top:437.700px;width:10.600px;height:10.600px;border-radius:6px;background:#e0e0e0"></div>
<div class="a" style="left:178px;top:430px;width:28px;height:26px;background:#262c3b"></div>
<div class="t" style="left:186.9px;top:433px;transform:scaleX(1.0000)">#</div>
<div class="a" style="left:210px;top:430px;width:88px;height:26px;background:#262c3b;border:1px solid #699ce8"></div>
<div class="a" style="left:216px;top:434px;width:30px;height:18px;background:#4a6595"></div><div class="a" style="left:216px;top:434px;width:1px;height:18px;background:#e8eaef"></div>
<div class="t" style="left:216.8px;top:433px;color:#e8eaef;transform:scaleX(1.3286)">ffffff</div>
<div class="a" style="left:7px;top:461px;width:291px;height:1px;background:#4a5265"></div>
<div class="a" style="left:8px;top:468px;width:28px;height:26px;background:#5e315b"></div><div class="a" style="left:36px;top:468px;width:28px;height:26px;background:#8c3f5d"></div><div class="a" style="left:64px;top:468px;width:28px;height:26px;background:#ba6156"></div><div class="a" style="left:92px;top:468px;width:28px;height:26px;background:#f2a65e"></div><div class="a" style="left:120px;top:468px;width:28px;height:26px;background:#ffe478"></div><div class="a" style="left:148px;top:468px;width:28px;height:26px;background:#cfff70"></div><div class="a" style="left:176px;top:468px;width:28px;height:26px;background:#8fde5d"></div><div class="a" style="left:204px;top:468px;width:28px;height:26px;background:#3ca370"></div><div class="a" style="left:232px;top:468px;width:28px;height:26px;background:#3d6e70"></div><div class="a" style="left:260px;top:468px;width:28px;height:26px;background:#323e4f"></div><div class="a" style="left:8px;top:494px;width:28px;height:26px;background:#322947"></div><div class="a" style="left:36px;top:494px;width:28px;height:26px;background:#473b78"></div><div class="a" style="left:64px;top:494px;width:28px;height:26px;background:#4b5bab"></div><div class="a" style="left:92px;top:494px;width:28px;height:26px;background:#4da6ff"></div><div class="a" style="left:120px;top:494px;width:28px;height:26px;background:#66ffe3"></div><div class="a" style="left:148px;top:494px;width:28px;height:26px;background:#ffffeb"></div><div class="a" style="left:176px;top:494px;width:28px;height:26px;background:#c2c2d1"></div><div class="a" style="left:204px;top:494px;width:28px;height:26px;background:#7e7e8f"></div><div class="a" style="left:232px;top:494px;width:28px;height:26px;background:#606070"></div><div class="a" style="left:260px;top:494px;width:28px;height:26px;background:#43434f"></div><div class="a" style="left:8px;top:520px;width:28px;height:26px;background:#272736"></div><div class="a" style="left:36px;top:520px;width:28px;height:26px;background:#3e2347"></div><div class="a" style="left:64px;top:520px;width:28px;height:26px;background:#57294b"></div><div class="a" style="left:92px;top:520px;width:28px;height:26px;background:#964253"></div><div class="a" style="left:120px;top:520px;width:28px;height:26px;background:#e36956"></div><div class="a" style="left:148px;top:520px;width:28px;height:26px;background:#ffb570"></div><div class="a" style="left:176px;top:520px;width:28px;height:26px;background:#ff9166"></div><div class="a" style="left:204px;top:520px;width:28px;height:26px;background:#eb564b"></div><div class="a" style="left:232px;top:520px;width:28px;height:26px;background:#b0305c"></div><div class="a" style="left:260px;top:520px;width:28px;height:26px;background:#73275c"></div><div class="a" style="left:8px;top:546px;width:28px;height:26px;background:#422445"></div><div class="a" style="left:36px;top:546px;width:28px;height:26px;background:#5a265e"></div><div class="a" style="left:64px;top:546px;width:28px;height:26px;background:#80366b"></div><div class="a" style="left:92px;top:546px;width:28px;height:26px;background:#bd4882"></div><div class="a" style="left:120px;top:546px;width:28px;height:26px;background:#ff6b97"></div><div class="a" style="left:148px;top:546px;width:28px;height:26px;background:#ffb5b5"></div>
<div class="a" style="left:8px;top:576px;width:28px;height:26px;background:#262c3b"></div>
<svg class="ic" style="left:14px;top:581px"><use href="#i-add"/></svg>
</div>
</div>


</body>
</html>
